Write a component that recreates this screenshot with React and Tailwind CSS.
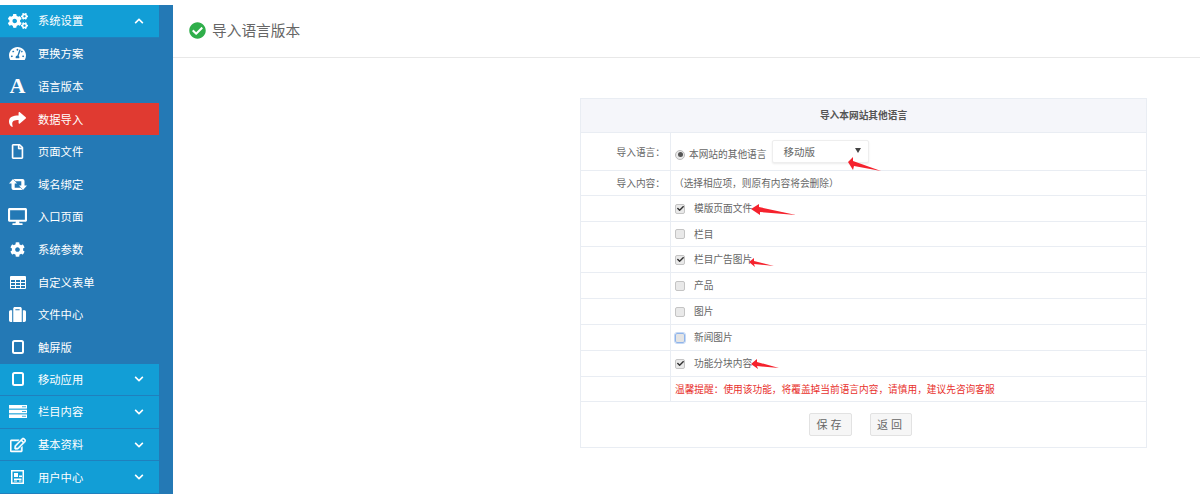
import React from "react";
import {
  FaCogs, FaTachometerAlt, FaShare, FaRegFile, FaDesktop, FaCog,
  FaSuitcase, FaRegEdit, FaChevronUp, FaChevronDown, FaCheckCircle, FaCheck,
} from "react-icons/fa";

const cjk = { fontFamily: '"Noto Sans CJK SC", "Liberation Sans", sans-serif' };

const TabletIcon = () => (
  <svg width="12" height="14" viewBox="0 0 12 14">
    <rect x="1" y="1" width="10" height="12" rx="1.5" fill="none" stroke="white" strokeWidth="2" />
  </svg>
);

const RetweetIcon = () => (
  <svg width="18" height="13" viewBox="0 0 18 13" fill="white">
    <path d="M4 1 L8 5.5 H5.7 V9.8 H11.5 L13.5 12 H4.5 Q2.5 12 2.5 10 V5.5 H0 Z" />
    <path d="M14 12 L10 7.5 H12.3 V3.2 H6.5 L4.5 1 H13.5 Q15.5 1 15.5 3 V7.5 H18 Z" />
  </svg>
);

const TableIcon = () => (
  <svg width="16" height="13" viewBox="0 0 16 13">
    <rect width="16" height="13" rx="1" fill="white" />
    {[4, 7, 10].map((y) =>
      [1, 6, 11].map((x) => <rect key={x + "-" + y} x={x} y={y} width="4" height="2" fill="#2479b5" />)
    )}
  </svg>
);

const ServerIcon = () => (
  <svg width="18" height="13" viewBox="0 0 18 13" fill="white">
    <rect width="18" height="3.6" />
    <rect y="4.7" width="18" height="3.6" />
    <rect y="9.4" width="18" height="3.6" />
    <rect x="13" y="1.4" width="4" height="0.8" fill="#129ed6" />
    <rect x="13" y="6.1" width="4" height="0.8" fill="#129ed6" />
    <rect x="13" y="10.8" width="4" height="0.8" fill="#129ed6" />
  </svg>
);

const ProfileIcon = () => (
  <svg width="13" height="14" viewBox="0 0 13 14" fill="white">
    <path fillRule="evenodd" d="M0 0 H13 V14 H0 Z M1.5 1.5 V12.5 H11.5 V1.5 Z" />
    <rect x="3" y="3" width="4" height="4" />
    <rect x="8" y="5.5" width="3" height="1.6" />
    <rect x="3" y="8.5" width="7.5" height="1.5" />
    <rect x="3" y="10.5" width="3" height="1" />
    <rect x="8" y="10.5" width="2.5" height="1" />
  </svg>
);

const menu = [
  { label: "系统设置", icon: <FaCogs size={20} />, group: true, open: true },
  { label: "更换方案", icon: <FaTachometerAlt size={17} /> },
  { label: "语言版本", icon: <span className="text-[22px] font-bold leading-none" style={{ fontFamily: '"Liberation Serif", serif' }}>A</span> },
  { label: "数据导入", icon: <FaShare size={17} />, active: true },
  { label: "页面文件", icon: <FaRegFile size={15} stroke="white" strokeWidth={8} /> },
  { label: "域名绑定", icon: <RetweetIcon /> },
  { label: "入口页面", icon: <FaDesktop size={19} /> },
  { label: "系统参数", icon: <FaCog size={15} /> },
  { label: "自定义表单", icon: <TableIcon /> },
  { label: "文件中心", icon: <FaSuitcase size={17} /> },
  { label: "触屏版", icon: <TabletIcon /> },
  { label: "移动应用", icon: <TabletIcon />, group: true },
  { label: "栏目内容", icon: <ServerIcon />, group: true },
  { label: "基本资料", icon: <FaRegEdit size={16} stroke="white" strokeWidth={16} />, group: true },
  { label: "用户中心", icon: <ProfileIcon />, group: true },
];

const Check = ({ checked, focus }) => (
  <span
    className={`flex w-[10px] h-[10px] items-center justify-center rounded-[2px] border ${
      focus ? "border-[#8fb4ea] outline outline-[#c4d8f5] bg-[#e4e4e4]" : "border-[#c4c4c4] bg-[#e9e9e9]"
    }`}
  >
    {checked && <FaCheck size={7} className="text-[#333]" />}
  </span>
);

const options = [
  { label: "模版页面文件", checked: true, h: "h-[26px]" },
  { label: "栏目", h: "h-[25px]" },
  { label: "栏目广告图片", checked: true, h: "h-[26px]" },
  { label: "产品", h: "h-[26px]" },
  { label: "图片", h: "h-[26px]" },
  { label: "新闻图片", focus: true, h: "h-[26px]" },
  { label: "功能分块内容", checked: true, h: "h-[26px]" },
];

// hand-drawn red arrows sitting on top of the form
const arrows = [
  { x: 848, y: 157, w: 33, h: 15, d: "M0 5 L5 0 L5 4 L33 14 L6 9 L5 13 Z" },
  { x: 751, y: 203, w: 45, h: 14, d: "M0 6 L8 1 L8 4 L45 12 L9 9 L9 12 Z" },
  { x: 749, y: 258, w: 25, h: 10, d: "M0 4 L5 0 L5 3 L25 8 L5 6 L6 9 Z" },
  { x: 751, y: 359, w: 28, h: 11, d: "M0 5 L6 0 L6 3 L28 9 L6 7 L7 10 Z" },
];

const Row = ({ label, h, labelClass = "", children }) => (
  <div className={`flex border-b border-[#e9edf3] ${h}`}>
    <div className={`w-[90px] shrink-0 flex items-center justify-end pr-[5px] border-r border-[#e9edf3] text-[#666] ${labelClass}`}>
      {label}
    </div>
    <div className="flex-1 flex items-center pl-[4px]">{children}</div>
  </div>
);

export default function App() {
  return (
    <div className="relative flex h-[494px] w-[1200px] overflow-hidden bg-white text-[9.7px] text-[#666]" style={cjk}>
      <aside className="w-[173px] shrink-0 h-full pt-[5px] pr-[14px] bg-[#2479b5] relative">
        <div className="absolute left-0 right-0 top-0 h-[5px] bg-white" />
        {menu.map((m) => (
          <div
            key={m.label}
            className={`flex items-center h-[32.6px] text-white text-[11.3px] ${
              m.active ? "bg-[#e03a31]" : m.group ? "bg-[#129ed6] border-b border-[#2080bd]" : ""
            }`}
          >
            <span className="w-[34px] pl-[1px] flex justify-center shrink-0">{m.icon}</span>
            <span className="ml-[4px] flex-1">{m.label}</span>
            {m.group &&
              (m.open ? (
                <FaChevronUp size={10} className="mr-[15px]" />
              ) : (
                <FaChevronDown size={10} className="mr-[15px]" />
              ))}
          </div>
        ))}
      </aside>

      <main className="flex-1 min-w-0">
        <div className="h-[58px] border-b border-[#e8e8e8] flex items-center pl-[16px] pt-[3px] gap-[6px] text-[14.7px] text-[#666]">
          <FaCheckCircle size={17} className="text-[#2fae4a]" />
          <span>导入语言版本</span>
        </div>

        <div className="ml-[407px] mt-[40px] w-[567px] h-[350px] border border-[#e9edf3]">
          <div className="h-[34px] bg-[#f5f6fa] border-b border-[#e9edf3] flex items-center justify-center font-bold text-[#555]">
            导入本网站其他语言
          </div>
          <Row label="导入语言：" h="h-[38px]" labelClass="pt-[2px]">
            <span className="mt-[6px] flex h-[10px] w-[10px] items-center justify-center rounded-full border border-[#bbb] bg-[#e9e9e9]">
              <span className="h-[5px] w-[5px] rounded-full bg-[#555]" />
            </span>
            <span className="mt-[6px] ml-[4px]">本网站的其他语言</span>
            <div className="ml-[5px] flex h-[23px] w-[97px] items-center justify-between rounded-[2px] border border-[#eee] bg-white pl-[11px] pr-[7px] text-[10.5px] shadow-[0_1px_2px_rgba(0,0,0,0.08)]">
              <span>移动版</span>
              <svg width="6" height="5" viewBox="0 0 6 5" className="mb-[3px]">
                <path d="M0 0 H6 L3 5 Z" fill="#444" />
              </svg>
            </div>
          </Row>
          <Row label="导入内容：" h="h-[25px]">
            <span className="-ml-[1px]">（选择相应项，则原有内容将会删除）</span>
          </Row>
          {options.map((o) => (
            <Row key={o.label} h={o.h}>
              <Check checked={o.checked} focus={o.focus} />
              <span className="ml-[9px]">{o.label}</span>
            </Row>
          ))}
          <Row h="h-[25px]">
            <span className="text-[#e8302c]">温馨提醒：使用该功能，将覆盖掉当前语言内容，请慎用，建议先咨询客服</span>
          </Row>
          <div className="flex h-[45px] items-center justify-center gap-[18px] pr-[6px] text-[11px] text-[#666]">
            <button className="h-[23px] w-[43px] rounded-[2px] border border-[#e2e2e2] bg-[#f6f6f6] tracking-[3px]">保存</button>
            <button className="h-[23px] w-[42px] rounded-[2px] border border-[#e2e2e2] bg-[#f6f6f6] tracking-[3px]">返回</button>
          </div>
        </div>
      </main>

      {arrows.map((a) => (
        <svg
          key={a.x + "-" + a.y}
          className="absolute"
          style={{ left: a.x, top: a.y }}
          width={a.w}
          height={a.h}
          viewBox={`0 0 ${a.w} ${a.h}`}
        >
          <path d={a.d} fill="#f5222d" />
        </svg>
      ))}
    </div>
  );
}
